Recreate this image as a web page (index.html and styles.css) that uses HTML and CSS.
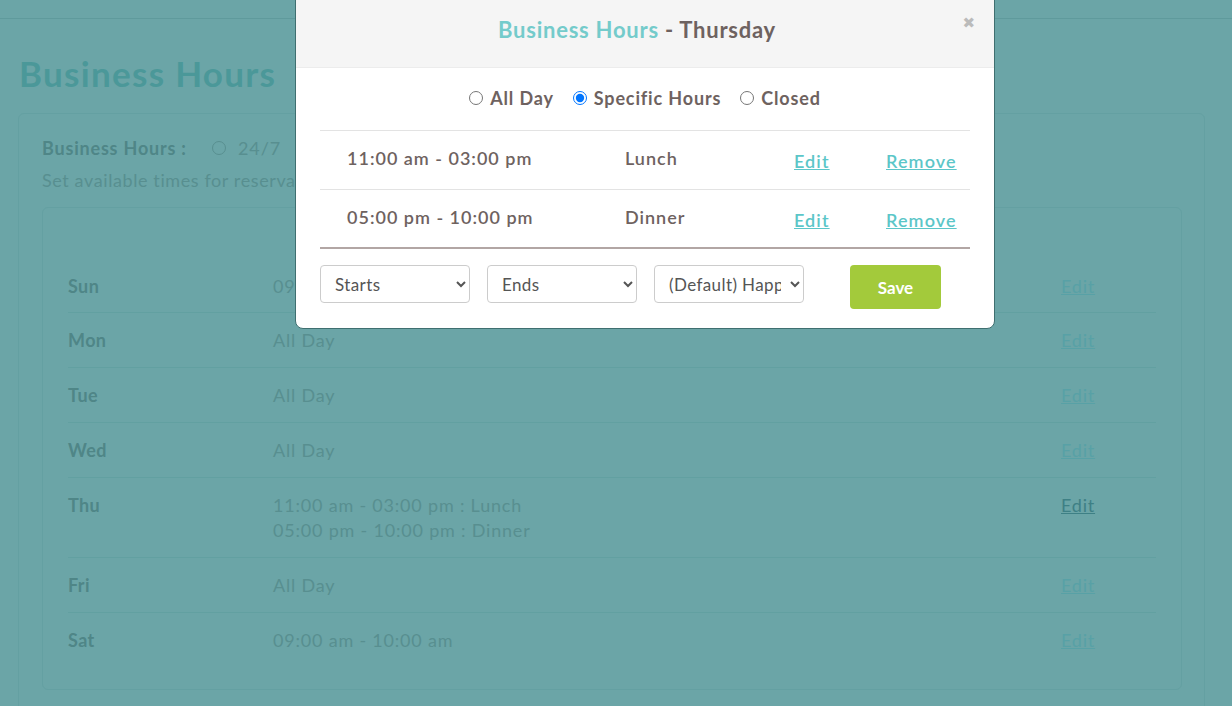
FILE: index.html
```html
<!DOCTYPE html>
<html>
<head>
<meta charset="utf-8">
<link rel="stylesheet" href="styles.css">
</head>
<body>
<div class="topbar"></div>
<main class="page">
  <h1 class="page-title">Business Hours</h1>
  <section class="outer-card">
    <div class="mode-row">
      <span class="mode-label">Business Hours :</span>
      <span class="fake-radio"></span><span class="mode-opt">24/7</span>
    </div>
    <p class="hint">Set available times for reservations on each day of the week.</p>
    <div class="inner-card">
      <div class="days">
        <div class="day-row"><span class="d">Sun</span><span class="t">09:00 am - 10:00 pm</span><a class="e">Edit</a></div>
        <div class="day-row"><span class="d">Mon</span><span class="t">All Day</span><a class="e">Edit</a></div>
        <div class="day-row"><span class="d">Tue</span><span class="t">All Day</span><a class="e">Edit</a></div>
        <div class="day-row"><span class="d">Wed</span><span class="t">All Day</span><a class="e">Edit</a></div>
        <div class="day-row tall"><span class="d">Thu</span><span class="t">11:00 am - 03:00 pm : Lunch<br>05:00 pm - 10:00 pm : Dinner</span><a class="e active">Edit</a></div>
        <div class="day-row"><span class="d">Fri</span><span class="t">All Day</span><a class="e">Edit</a></div>
        <div class="day-row"><span class="d">Sat</span><span class="t">09:00 am - 10:00 am</span><a class="e">Edit</a></div>
      </div>
    </div>
  </section>
</main>

<div class="modal">
  <div class="modal-head">
    <h2 class="modal-title"><span class="mt-brand">Business Hours</span> - Thursday</h2>
    <span class="close">&#x2716;</span>
  </div>
  <div class="modal-body">
    <div class="radios">
      <label class="r"><input type="radio" name="m"> All Day</label>
      <label class="r"><input type="radio" name="m" checked> Specific Hours</label>
      <label class="r"><input type="radio" name="m"> Closed</label>
    </div>
    <div class="slots">
      <div class="slot"><span class="s-time">11:00 am - 03:00 pm</span><span class="s-name">Lunch</span><a class="s-link">Edit</a><a class="s-link">Remove</a></div>
      <div class="slot"><span class="s-time">05:00 pm - 10:00 pm</span><span class="s-name">Dinner</span><a class="s-link">Edit</a><a class="s-link">Remove</a></div>
    </div>
    <div class="add-row">
      <select class="sel"><option>Starts</option></select>
      <select class="sel"><option>Ends</option></select>
      <select class="sel"><option>(Default) Happy Hour</option></select>
      <button class="save">Save</button>
    </div>
  </div>
</div>
</body>
</html>
```

FILE: styles.css
```css
html, body {
  margin: 0;
  padding: 0;
  height: 100%;
  overflow: hidden;
}
body {
  background: #6ba5a7;
  font-family: Lato, "Open Sans", sans-serif;
  position: relative;
}
.topbar {
  height: 18px;
  border-bottom: 1px solid #5f9a9c;
}
.page {
  padding: 0 27px 0 18px;
}
.page-title {
  margin: 33px 0 0 1px;
  font-size: 35px;
  font-weight: 700;
  color: #4b9899;
  line-height: 42px;
  letter-spacing: 1.3px;
}
.outer-card {
  margin-top: 19px;
  border: 1px solid #64a0a2;
  border-radius: 6px;
  padding: 21px 22px 0 23px;
  height: 700px;
}
.mode-row {
  display: flex;
  align-items: center;
  height: 26px;
}
.mode-label {
  font-weight: 700;
  font-size: 18px;
  letter-spacing: 0.8px;
  color: #4f8687;
  width: 170px;
}
.fake-radio {
  width: 12px;
  height: 12px;
  border: 1px solid #588f90;
  border-radius: 50%;
  margin-right: 12px;
}
.mode-opt {
  font-size: 18px;
  letter-spacing: 0.9px;
  color: #588f90;
}
.hint {
  margin: 8px 0 0;
  font-size: 18px;
  letter-spacing: 0.6px;
  color: #588f90;
  line-height: 22px;
}
.inner-card {
  margin-top: 16px;
  border: 1px solid #64a0a2;
  border-radius: 6px;
  width: 1140px;
  height: 483px;
  box-sizing: border-box;
  padding: 49px 25px 0 25px;
}
.day-row {
  display: grid;
  grid-template-columns: 205px 788px 1fr;
  height: 55px;
  align-items: start;
  padding-top: 15px;
  box-sizing: border-box;
  border-top: 1px solid #62a0a1;
  font-size: 18px;
  line-height: 25px;
}
.day-row:first-child { border-top: none; padding-top: 17px; }
.day-row.tall { height: 80px; }
.d { font-weight: 700; color: #4f8687; letter-spacing: 0.4px; }
.t { color: #588f90; letter-spacing: 0.8px; }
.e { color: #58a1a6; text-decoration: underline; letter-spacing: 0.8px; }
.e.active { color: #3e8085; }

/* modal */
.modal {
  position: absolute;
  left: 295px;
  top: -12px;
  width: 698px;
  background: #fff;
  border: 1px solid #3f6f70;
  border-radius: 8px;
  overflow: hidden;
}
.modal-head {
  position: relative;
  background: #f5f5f5;
  border-bottom: 1px solid #ececec;
  height: 79px;
  box-sizing: border-box;
  padding: 27px 16px 0 0;
  text-align: center;
}
.modal-title {
  margin: 0;
  font-size: 22px;
  line-height: 28px;
  font-weight: 700;
  letter-spacing: 0.75px;
  color: #6e6260;
}
.mt-brand { color: #74cbcb; }
.close {
  position: absolute;
  right: 19px;
  top: 25px;
  color: #bbbbbb;
  font-size: 15px;
  font-family: "DejaVu Sans", sans-serif;
}
.modal-body {
  padding: 0 24px 19px 24px;
}
.radios {
  display: flex;
  justify-content: center;
  gap: 19px;
  padding-bottom: 3px;
  box-sizing: border-box;
  height: 63px;
  align-items: center;
  border-bottom: 1px solid #e3e3e3;
}
.r {
  font-size: 18px;
  font-weight: 700;
  letter-spacing: 0.85px;
  color: #6e6260;
  display: flex;
  align-items: center;
}
.r input {
  margin: 0 7px 0 0;
  width: 14px;
  height: 14px;
}
.slots {
  border-bottom: 2px solid #b2a6a4;
}
.slot {
  display: grid;
  grid-template-columns: 278px 169px 92px 1fr;
  height: 58px;
  padding: 15px 0 0 27px;
  box-sizing: border-box;
  font-size: 18px;
  line-height: 24px;
  letter-spacing: 1px;
  color: #6e6260;
  font-weight: 600;
}
.slot + .slot { border-top: 1px solid #e3e3e3; height: 58px; }
.s-link {
  color: #5cc6c8;
  text-decoration: underline;
  padding-top: 3px;
  letter-spacing: 1.1px;
}
.add-row {
  display: flex;
  align-items: flex-start;
  margin-top: 16px;
}
.sel {
  width: 150px;
  height: 38px;
  margin-right: 17px;
  border: 1px solid #cccccc;
  border-radius: 4px;
  background: #fff;
  font-family: Lato, "Open Sans", sans-serif;
  font-size: 17px;
  letter-spacing: 0.4px;
  color: #555;
  padding: 0 6px 0 10px;
}
.sel:nth-child(3) { margin-right: 46px; }
.save {
  width: 91px;
  height: 44px;
  border: none;
  border-radius: 4px;
  background: #a3ca3b;
  color: #fff;
  font-family: Lato, "Open Sans", sans-serif;
  font-weight: 700;
  font-size: 17px;
}
```
